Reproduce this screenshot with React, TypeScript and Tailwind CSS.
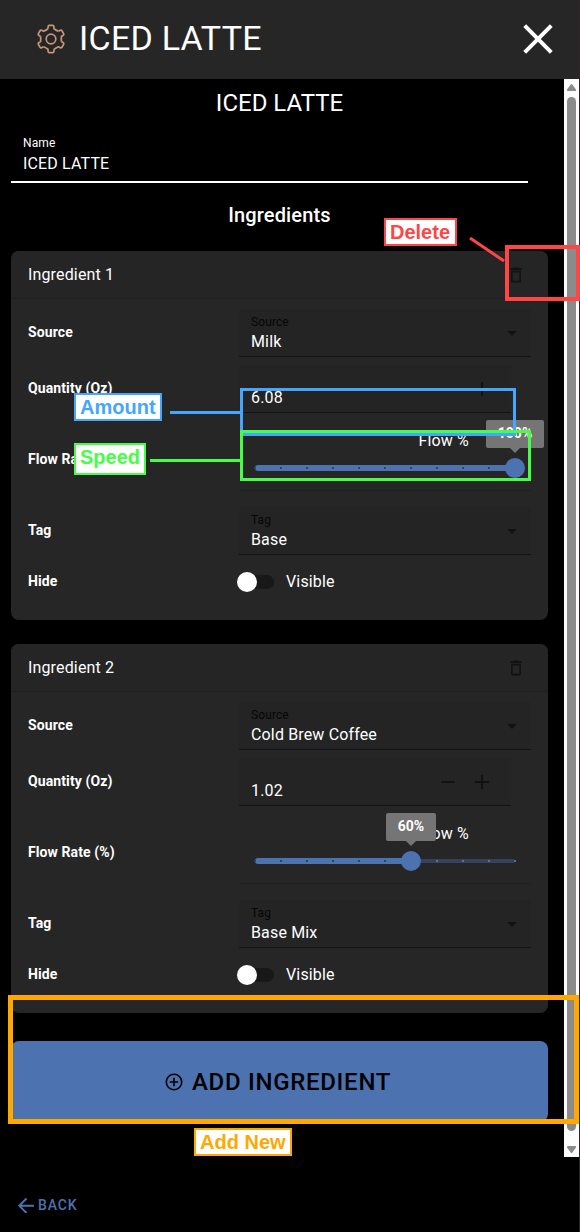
import React from 'react';
import { MdDeleteOutline, MdArrowDropDown, MdAdd, MdRemove } from 'react-icons/md';

interface Ingredient {
  id: number;
  source: string;
  quantity: string;
  flow: number;
  tag: string;
}

const ingredients: Ingredient[] = [
  { id: 1, source: 'Milk', quantity: '6.08', flow: 100, tag: 'Base' },
  { id: 2, source: 'Cold Brew Coffee', quantity: '1.02', flow: 60, tag: 'Base Mix' },
];

const ticks = [0, 10, 20, 30, 40, 50, 60, 70, 80, 90, 100];

function GearIcon() {
  return (
    <svg viewBox="-18 -18 36 36" className="mb-[2px] size-9" fill="none" stroke="#c6957a" strokeWidth="1.7" strokeLinejoin="round">
      <circle r="4.8" />
      {[0, 60, 120, 180, 240, 300].map((deg) => (
        <path
          key={deg}
          transform={`rotate(${deg})`}
          d="M-3 -10.3L-2.9 -12.5Q-2.8 -13.6 -1.7 -13.6H1.7Q2.8 -13.6 2.9 -12.5L3 -10.3Q5.1 -8.8 7.42 -7.75"
        />
      ))}
    </svg>
  );
}

function Header() {
  return (
    <header className="flex h-[79px] shrink-0 items-center bg-[#262626] pl-[33px] pr-[19px]">
      <GearIcon />
      <h1 className="ml-[10px] flex-1 pb-[3px] text-[34px] leading-[40px] tracking-[0.25px]">ICED LATTE</h1>
      <svg viewBox="0 0 44 44" className="mb-[2px] size-11" fill="none" stroke="white" strokeWidth="4">
        <path d="M8.7 8.7L35.3 35.3M35.3 8.7L8.7 35.3" />
      </svg>
    </header>
  );
}

function Label({ children }: { children: React.ReactNode }) {
  return <div className="w-[211px] shrink-0 pb-[2px] text-[14px] leading-5 font-bold tracking-[0.1px]">{children}</div>;
}

function SelectField({ label, value }: { label: string; value: string }) {
  return (
    <div className="flex h-12 w-[292px] items-center rounded-t border-b border-[#121212] bg-[#242424] pl-3 pr-[7px]">
      <div className="flex-1">
        <div className="mt-[3px] text-[12px] leading-[14px] tracking-[0.1px] text-[#060606]">{label}</div>
        <div className="mt-[2px] text-[16px] leading-[22px] tracking-[0.15px]">{value}</div>
      </div>
      <MdArrowDropDown className="size-6 text-[#121212]" />
    </div>
  );
}

function Slider({ value }: { value: number }) {
  return (
    <div className="relative mx-4 h-2 w-[260px]">
      <div className="absolute inset-x-0 top-[2px] h-1 rounded-sm bg-[#34435b]" />
      <div className="absolute left-0 top-px h-[6px] rounded-sm bg-[#4c72b0]" style={{ width: `${value}%` }} />
      {ticks.map((t) => (
        <span
          key={t}
          className={`absolute top-[3px] -ml-px size-[2px] ${t <= value ? 'bg-[#34435b]' : 'bg-[#4c72b0]'}`}
          style={{ left: `${t}%` }}
        />
      ))}
      <div
        className="absolute -top-[6px] flex size-5 -translate-x-1/2 justify-center rounded-full bg-[#4c72b0]"
        style={{ left: `${value}%` }}
      >
        <div className="absolute bottom-[30px] flex h-7 items-center rounded-[2px] bg-[#757575] px-3 pb-[2px] text-[14px] font-bold">
          {value}%
        </div>
        <div className="absolute bottom-[25px] border-x-[5px] border-t-[5px] border-x-transparent border-t-[#757575]" />
      </div>
    </div>
  );
}

function IngredientCard({ item }: { item: Ingredient }) {
  return (
    <section className="h-[369px] w-[537px] rounded-lg bg-[#262626]">
      <div className="flex h-12 items-center justify-between rounded-t-lg border-b border-[#202020] bg-[#252525] pl-[17px] pr-[22px]">
        <span className="text-[16px] tracking-[0.15px]">{`Ingredient ${item.id}`}</span>
        <MdDeleteOutline className="size-5 text-[#121212]" />
      </div>
      <div className="pl-[17px] pt-[10px]">
        <div className="flex h-12 items-center">
          <Label>Source</Label>
          <SelectField label="Source" value={item.source} />
        </div>
        <div className="mt-2 flex h-12 items-center">
          <Label>Quantity (Oz)</Label>
          <div className="flex h-12 w-[272px] items-center rounded-t border-b border-[#121212] bg-[#242424] pl-3 pr-[17px]">
            <span className="flex-1 pt-[18px] text-[16px] leading-[22px] tracking-[0.15px]">{item.quantity}</span>
            <MdRemove className="mr-[10px] size-6 text-[#121212]" />
            <MdAdd className="size-6 text-[#121212]" />
          </div>
        </div>
        <div className="mt-2 flex h-[70px] items-end">
          <div className="pb-5">
            <Label>Flow Rate (%)</Label>
          </div>
          <div className="h-[70px] w-[292px] border-b border-[#202020] pt-2">
            <div className="pr-[62px] text-right text-[16px] leading-[24px] tracking-[0.15px]">Flow %</div>
            <div className="mt-[11px]">
              <Slider value={item.flow} />
            </div>
          </div>
        </div>
        <div className="mt-4 flex h-12 items-center">
          <Label>Tag</Label>
          <SelectField label="Tag" value={item.tag} />
        </div>
        <div className="mt-2 flex h-[38px] items-center">
          <Label>Hide</Label>
          <div className="-ml-[2px] flex h-5 w-[37px] items-center">
            <div className="relative ml-[3px] h-[14px] w-[34px] rounded-full bg-[#181818]">
              <div className="absolute -left-[3px] -top-[3px] size-5 rounded-full bg-white" />
            </div>
          </div>
          <span className="ml-3 text-[16px] tracking-[0.15px]">Visible</span>
        </div>
      </div>
    </section>
  );
}

function Scrollbar() {
  return (
    <div className="flex w-[15px] shrink-0 flex-col items-center bg-[#fcfcfc] pb-[4px] pt-[5px]">
      <svg viewBox="0 0 9 7" className="h-[7px] w-[9px]" fill="#8b8b8b">
        <path d="M3.7 .6Q4.5-.4 5.3.6L8.8 5.3Q9.4 7 8 7H1Q-.4 7 .2 5.3Z" />
      </svg>
      <div className="mt-[6px] w-[9px] flex-1 rounded-full bg-[#8b8b8b]" />
      <svg viewBox="0 0 9 7" className="mt-[15px] h-[7px] w-[9px] rotate-180" fill="#8b8b8b">
        <path d="M3.7 .6Q4.5-.4 5.3.6L8.8 5.3Q9.4 7 8 7H1Q-.4 7 .2 5.3Z" />
      </svg>
    </div>
  );
}

// Callout boxes and captions that sit on top of the form
function Callouts() {
  return (
    <div className="pointer-events-none absolute inset-0 font-['Liberation_Sans',Arial,sans-serif] text-[20px] leading-[22px] font-bold">
      <div className="absolute left-[505px] top-[245px] h-[56px] w-[75px] border-4 border-[#ff4545]" />
      <div className="absolute left-[240px] top-[388px] h-[48px] w-[276px] border-[3px] border-[#45a6ff]" />
      <div className="absolute left-[240px] top-[430px] h-[51px] w-[291px] border-[3px] border-[#45ff45]" />
      <div className="absolute left-[8px] top-[995px] h-[129px] w-[571px] border-[5px] border-[#ffa800]" />
      <svg className="absolute inset-0 h-[520px] w-full" viewBox="0 0 580 520" strokeWidth="3">
        <path d="M470 238L504 261" stroke="#ff4545" />
        <path d="M170 412.5H240" stroke="#45a6ff" />
        <path d="M150 460.5H240" stroke="#45ff45" />
      </svg>
      <div className="absolute left-[384px] top-[218px] flex h-[28px] w-[73px] border-2 border-[#ff4545] bg-white pl-1 pt-px text-[#ff4545]">
        Delete
      </div>
      <div className="absolute left-[74px] top-[393px] flex h-[28px] w-[88px] border-2 border-[#45a6ff] bg-white pl-1 pt-px text-[#45a6ff]">
        Amount
      </div>
      <div className="absolute left-[74px] top-[443px] flex h-[32px] w-[72px] border-2 border-[#45ff45] bg-white pl-1 pt-px text-[#45ff45]">
        Speed
      </div>
      <div className="absolute left-[194px] top-[1128px] flex h-[28px] w-[98px] whitespace-nowrap border-2 border-[#ffa800] bg-white pl-1 pt-px text-[#ffa800]">
        Add New
      </div>
    </div>
  );
}

export default function App() {
  return (
    <div className="relative flex h-[1232px] w-[580px] overflow-hidden bg-black font-['Roboto',sans-serif] text-white">
      <div className="flex w-[579px] flex-col">
        <Header />
        <div className="flex h-[1078px]">
          <main className="flex flex-1 flex-col pl-[11px]">
            <h2 className="w-[537px] pt-2 text-center text-[24px] leading-8">ICED LATTE</h2>
            <div className="mt-[15px] h-[49px] w-[517px] border-b-2 border-white pl-3">
              <div className="text-[12px] leading-[18px] tracking-[0.1px]">Name</div>
              <div className="mt-px text-[16px] leading-[22px] tracking-[0.15px]">ICED LATTE</div>
            </div>
            <h3 className="mt-[16px] h-8 w-[537px] text-center text-[20px] leading-8 font-medium tracking-[0.15px]">Ingredients</h3>
            <div className="mt-[20px] flex flex-col gap-6">
              {ingredients.map((item) => (
                <IngredientCard key={item.id} item={item} />
              ))}
            </div>
            <button className="mt-7 flex h-[81px] w-[537px] shrink-0 items-center justify-center gap-[9px] rounded-lg bg-[#4c72b0] pr-[3px] text-[24px] font-medium tracking-[0.7px] text-black">
              <svg viewBox="0 0 18 18" className="size-[18px]" fill="none" stroke="currentColor" strokeWidth="1.6">
                <circle cx="9" cy="9" r="7.7" />
                <path d="M9 4.8V13.2M4.8 9H13.2" />
              </svg>
              ADD INGREDIENT
            </button>
          </main>
          <Scrollbar />
        </div>
        <footer className="flex flex-1 items-center pb-[1px] pl-[18px] pt-[22px] text-[#4c72b0]">
          <svg viewBox="0 0 16 16" className="size-4" fill="none" stroke="currentColor" strokeWidth="1.9">
            <path d="M16 8.7H1M8.5 1.5L1.2 8.7L8.5 16" />
          </svg>
          <span className="ml-1 text-[14px] font-medium tracking-[0.9px]">BACK</span>
        </footer>
      </div>
      <div className="w-px bg-[#2c2529]" />
      <Callouts />
    </div>
  );
}
